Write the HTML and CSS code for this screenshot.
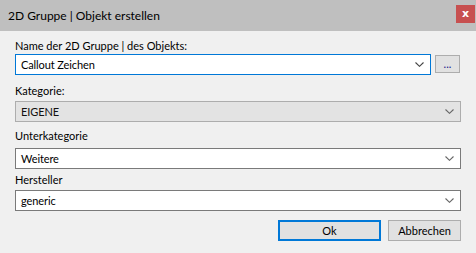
FILE: index.html
```html
<!DOCTYPE html>
<html lang="de">
<head>
    <meta charset="UTF-8">
    <meta name="viewport" content="width=device-width, initial-scale=1.0">
    <title>2D Gruppe | Objekt erstellen</title>
    <link rel="stylesheet" href="styles.css">
</head>
<body>

    <div class="dialog">
        <div class="titlebar">
            <span class="title">2D Gruppe | Objekt erstellen</span>
            <button class="close-button">x</button>
        </div>

        <div class="content">
            <label class="label first">Name der 2D Gruppe | des Objekts:</label>
            <div class="name-row">
                <div class="combo focused">
                    <span class="combo-text">Callout Zeichen</span>
                    <svg class="chevron" width="9" height="5" viewBox="0 0 9 5"><path d="M0.5 0.5 L4.5 4.3 L8.5 0.5" fill="none" stroke="#444" stroke-width="1.1"/></svg>
                </div>
                <button class="button dots-button">...</button>
            </div>

            <label class="label kategorie">Kategorie:</label>
            <div class="combo disabled">
                <span class="combo-text">EIGENE</span>
                <svg class="chevron" width="9" height="5" viewBox="0 0 9 5"><path d="M0.5 0.5 L4.5 4.3 L8.5 0.5" fill="none" stroke="#666" stroke-width="1.1"/></svg>
            </div>

            <label class="label unterkategorie">Unterkategorie</label>
            <div class="combo">
                <span class="combo-text">Weitere</span>
                <svg class="chevron" width="9" height="5" viewBox="0 0 9 5"><path d="M0.5 0.5 L4.5 4.3 L8.5 0.5" fill="none" stroke="#666" stroke-width="1.1"/></svg>
            </div>

            <label class="label hersteller">Hersteller</label>
            <div class="combo">
                <span class="combo-text">generic</span>
                <svg class="chevron" width="9" height="5" viewBox="0 0 9 5"><path d="M0.5 0.5 L4.5 4.3 L8.5 0.5" fill="none" stroke="#666" stroke-width="1.1"/></svg>
            </div>

            <div class="buttons">
                <button class="button ok-button">Ok</button>
                <button class="button cancel-button">Abbrechen</button>
            </div>
        </div>
    </div>

</body>
</html>
```

FILE: styles.css
```css
body {
    margin: 0;
    font-family: Lato, "Noto Sans", sans-serif;
    font-size: 11px;
    color: #000;
    background: #f0f0f0;
    width: 476px;
    height: 253px;
    overflow: hidden;
}

.dialog {
    display: flex;
    flex-direction: column;
    height: 253px;
}

.titlebar {
    height: 31px;
    background: #bfbfbf;
    display: flex;
    align-items: center;
    justify-content: space-between;
    padding-left: 8px;
    box-sizing: border-box;
}

.title {
    font-size: 12px;
    color: #000;
}

.close-button {
    width: 19px;
    height: 18px;
    margin-right: 1px;
    margin-top: -4px;
    border: none;
    padding: 0;
    background: #c75050;
    color: #fff;
    font-family: "DejaVu Sans", sans-serif;
    font-weight: bold;
    font-size: 11px;
    line-height: 16px;
}

.content {
    padding: 7px 15px 0 15px;
    display: flex;
    flex-direction: column;
}

.label {
    display: block;
    line-height: 15px;
    height: 15px;
}

.label.first { margin-bottom: 1px; }
.label.kategorie { margin-top: 8px; margin-bottom: 3px; }
.label.unterkategorie { margin-top: 6px; margin-bottom: 5px; }
.label.hersteller { margin-top: 3px; margin-bottom: 3px; }

.name-row {
    display: flex;
    gap: 4px;
    align-items: flex-start;
}

.combo {
    height: 21px;
    box-sizing: border-box;
    border: 1px solid #7a7a7a;
    background: #fff;
    display: flex;
    align-items: center;
    justify-content: space-between;
    padding: 0 5px 0 5px;
}

.combo-text {
    letter-spacing: -0.1px;
}

.combo.focused {
    flex: 1;
    border-color: #0078d7;
}

.combo.disabled {
    background: #e3e3e3;
    border-color: #adadad;
    color: #111;
}

.chevron {
    margin-right: 1px;
}

.button {
    font-family: Lato, "Noto Sans", sans-serif;
    font-size: 11px;
    background: #e1e1e1;
    border: 1px solid #adadad;
    color: #000;
    padding: 0;
    box-sizing: border-box;
}

.dots-button {
    width: 25px;
    height: 18px;
    margin-top: 1px;
    margin-right: 1px;
    line-height: 12px;
    color: #1a1a8a;
}

.buttons {
    display: flex;
    justify-content: flex-end;
    gap: 7px;
    margin-top: 9px;
}

.ok-button {
    width: 103px;
    height: 21px;
    border: 2px solid #0078d7;
}

.cancel-button {
    width: 73px;
    height: 21px;
}
```
